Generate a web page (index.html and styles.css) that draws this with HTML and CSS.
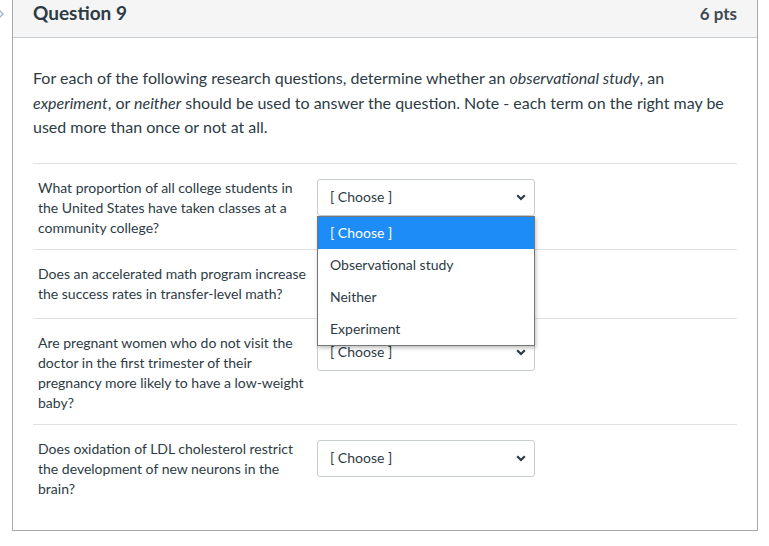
FILE: index.html
```html
<!DOCTYPE html>
<html lang="en">
<head>
<meta charset="utf-8">
<title>Question 9</title>
<link rel="stylesheet" href="styles.css">
</head>
<body>
<span class="nav-arrow"><svg width="8" height="10" viewBox="0 0 8 10"><path d="M1 1 L5 5 L1 9" fill="none" stroke="#9fb6cc" stroke-width="1.4"/></svg></span>
<div class="card">
  <div class="card-header">
    <span class="q-title">Question 9</span>
    <span class="q-pts">6 pts</span>
  </div>
  <div class="card-body">
    <p class="prompt">For each of the following research questions, determine whether an <em>observational study</em>, an <em>experiment</em>, or <em>neither</em> should be used to answer the question. Note - each term on the right may be used more than once or not at all.</p>
    <div class="answers">
      <div class="row row-open">
        <div class="label">What proportion of all college students in the United States have taken classes at a community college?</div>
        <div class="select-wrap">
          <div class="select"><span>[ Choose ]</span><svg class="chev" width="10" height="7" viewBox="0 0 10 7"><path d="M1.2 1.2 L5 5 L8.8 1.2" fill="none" stroke="#2d3b45" stroke-width="2.2"/></svg></div>
          <ul class="dropdown">
            <li class="selected">[ Choose ]</li>
            <li>Observational study</li>
            <li>Neither</li>
            <li>Experiment</li>
          </ul>
        </div>
      </div>
      <div class="row">
        <div class="label">Does an accelerated math program increase the success rates in transfer-level math?</div>
        <div class="select-wrap">
          <div class="select"><span>[ Choose ]</span><svg class="chev" width="10" height="7" viewBox="0 0 10 7"><path d="M1.2 1.2 L5 5 L8.8 1.2" fill="none" stroke="#2d3b45" stroke-width="2.2"/></svg></div>
        </div>
      </div>
      <div class="row">
        <div class="label">Are pregnant women who do not visit the doctor in the first trimester of their pregnancy more likely to have a low-weight baby?</div>
        <div class="select-wrap">
          <div class="select"><span>[ Choose ]</span><svg class="chev" width="10" height="7" viewBox="0 0 10 7"><path d="M1.2 1.2 L5 5 L8.8 1.2" fill="none" stroke="#2d3b45" stroke-width="2.2"/></svg></div>
        </div>
      </div>
      <div class="row last">
        <div class="label">Does oxidation of LDL cholesterol restrict the development of new neurons in the brain?</div>
        <div class="select-wrap">
          <div class="select"><span>[ Choose ]</span><svg class="chev" width="10" height="7" viewBox="0 0 10 7"><path d="M1.2 1.2 L5 5 L8.8 1.2" fill="none" stroke="#2d3b45" stroke-width="2.2"/></svg></div>
        </div>
      </div>
    </div>
  </div>
</div>
</body>
</html>
```
FILE: styles.css
```css
* { box-sizing: border-box; }
html, body {
  margin: 0;
  padding: 0;
  background: #ffffff;
  font-family: Lato, "Open Sans", "Liberation Sans", sans-serif;
  color: #2d3b45;
}
body { position: relative; }
.nav-arrow {
  position: absolute;
  left: -2px;
  top: 9px;
  line-height: 0;
}
.card {
  margin-left: 12px;
  width: 746px;
  border: 1px solid #a8a8a8;
  border-top: none;
}
.card-header {
  height: 38px;
  background: #f5f5f5;
  border-bottom: 1px solid #c7cdd1;
  display: flex;
  justify-content: space-between;
  align-items: flex-start;
  padding: 2px 20px 0 20px;
}
.q-title {
  font-size: 19px;
  font-weight: 700;
  line-height: 22px;
}
.q-pts {
  font-size: 17px;
  font-weight: 700;
  line-height: 24px;
  color: #3d4a54;
}
.card-body {
  padding: 28px 20px 20px 20px;
}
.prompt {
  margin: 0 0 23px 0;
  font-size: 16px;
  line-height: 24.5px;
}
.answers {
  border-top: 1px solid #dfe2e4;
}
.row {
  display: flex;
  align-items: flex-start;
  border-bottom: 1px solid #dfe2e4;
  padding: 14px 0 11px 5px;
}
.row.last { border-bottom: none; }
.label {
  width: 279px;
  font-size: 14px;
  line-height: 20px;
  padding-right: 11px;
}
.select-wrap {
  position: relative;
  margin-top: 1px;
  margin-bottom: 5px;
}
.select {
  width: 218px;
  height: 37px;
  border: 1px solid #c7cdd1;
  border-radius: 3px;
  background: #fff;
  display: flex;
  align-items: center;
  justify-content: space-between;
  padding: 0 8px 0 12px;
  font-size: 14px;
}
.select span { position: relative; top: -1px; }
.chev { display: block; margin-top: 1px; }
.dropdown {
  position: absolute;
  left: 0;
  top: 37px;
  width: 218px;
  margin: 0;
  padding: 0;
  list-style: none;
  background: #fff;
  border: 1px solid #767676;
  box-shadow: 1px 2px 4px rgba(0,0,0,0.25);
  z-index: 2;
}
.dropdown li {
  height: 32px;
  line-height: 31px;
  padding-left: 12px;
  font-size: 14px;
  color: #2d3b45;
}
.dropdown li.selected {
  background: #1e8cf7;
  color: #ffffff;
}
```
